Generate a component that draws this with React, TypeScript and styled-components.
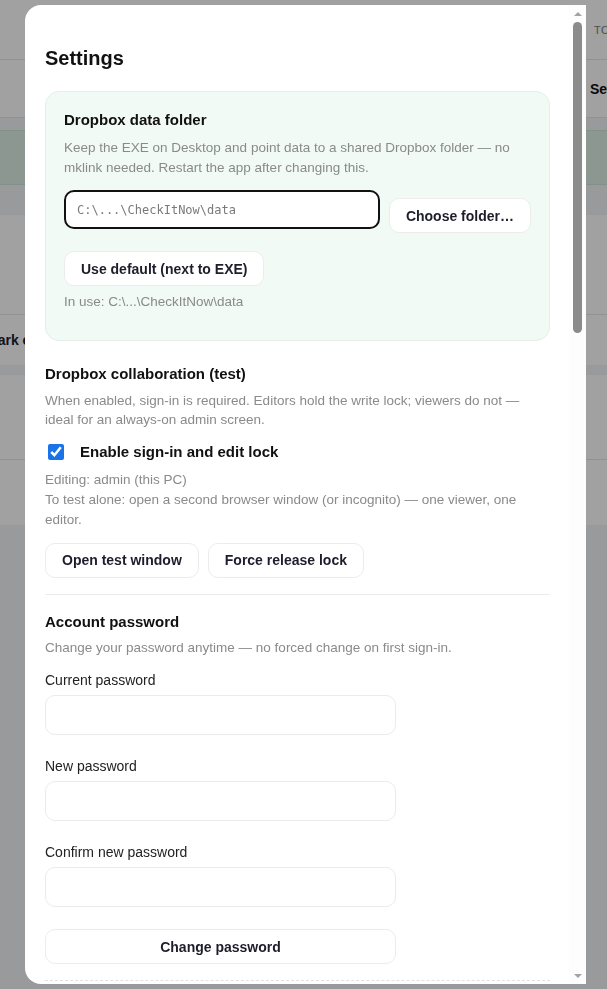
import React from "react";
import styled, { createGlobalStyle } from "styled-components";

const GlobalStyle = createGlobalStyle`
  * { box-sizing: border-box; }
  html, body { margin: 0; padding: 0; height: 100%; overflow: hidden; }
  body {
    font-family: "Liberation Sans", Arial, Helvetica, sans-serif;
    background: #f3f4f6;
    color: #111;
  }
`;

/* ---------- background page (dimmed behind the dialog) ---------- */

const Backdrop = styled.div`
  min-height: 100vh;
  background: #f3f4f6;
  display: flex;
  flex-direction: column;
`;

const TopBar = styled.header`
  background: #fff;
  display: flex;
  flex-direction: column;
`;

const TopRow = styled.div<{ $h: number; $edge: number }>`
  height: ${(p) => p.$h}px;
  display: grid;
  grid-template-columns: 1fr ${(p) => p.$edge}px;
  align-items: center;
  border-bottom: 1px solid #e5e7eb;
  white-space: nowrap;
  overflow: hidden;
`;

const HeaderCaption = styled.span`
  font-size: 11px;
  letter-spacing: 0.4px;
  text-transform: uppercase;
  color: #7a7a7a;
`;

const HeaderAction = styled.span`
  font-size: 14px;
  font-weight: 700;
  color: #111;
`;

const Banner = styled.div`
  margin-top: 12px;
  height: 55px;
  background: #dcefe4;
  border-top: 1px solid #cfe6d8;
  border-bottom: 1px solid #cfe6d8;
`;

const ListCard = styled.section<{ $top: number }>`
  margin-top: ${(p) => p.$top}px;
  background: #fff;
  display: flex;
  flex-direction: column;
`;

const ListRow = styled.div<{ $h: number; $line?: boolean }>`
  height: ${(p) => p.$h}px;
  display: flex;
  align-items: center;
  border-bottom: ${(p) => (p.$line ? "1px solid #e5e7eb" : "none")};
  white-space: nowrap;
  overflow: hidden;
`;

const RowLabel = styled.span`
  margin-left: -14px;
  font-size: 14px;
  font-weight: 700;
  color: #1d1d2c;
`;

/* ---------- dialog ---------- */

const Overlay = styled.div`
  position: fixed;
  inset: 0;
  background: rgba(0, 0, 0, 0.37);
  display: flex;
  justify-content: center;
  align-items: stretch;
  padding: 5px 0 5px 4px;
`;

const Modal = styled.div`
  width: 561px;
  background: #fff;
  border-radius: 16px 0 0 16px;
  overflow: hidden;
  display: flex;
`;

const ScrollArea = styled.div`
  flex: 1;
  min-width: 0;
  overflow-y: auto;
  padding: 0 19px 0 20px;
  scrollbar-width: none;
`;

const Rail = styled.div`
  width: 17px;
  flex-shrink: 0;
  background: #fdfdfd;
  display: flex;
  flex-direction: column;
`;

const RailButton = styled.div`
  height: 17px;
  flex-shrink: 0;
  display: flex;
  align-items: center;
  justify-content: center;
`;

const Arrow = styled.span<{ $down?: boolean }>`
  width: 0;
  height: 0;
  border-left: 4px solid transparent;
  border-right: 4px solid transparent;
  border-top: ${(p) => (p.$down ? "4px solid #a3a3a3" : "0")};
  border-bottom: ${(p) => (p.$down ? "0" : "4px solid #a3a3a3")};
`;

const Track = styled.div`
  flex: 1;
  display: flex;
  flex-direction: column;
  padding: 0 4px;
`;

const Thumb = styled.div<{ $size: number }>`
  height: ${(p) => p.$size}px;
  background: #8b8b8b;
  border-radius: 5px;
`;

const Title = styled.h2`
  margin: 41px 0 21px;
  font-size: 20px;
  line-height: 24px;
  font-weight: 700;
  color: #111;
`;

const FolderCard = styled.section`
  background: #f2faf5;
  border: 1px solid #e3efe8;
  border-radius: 14px;
  padding: 19px 18px 28px;
`;

const Section = styled.section<{ $top: number }>`
  margin-top: ${(p) => p.$top}px;
`;

const SectionTitle = styled.h3`
  margin: 0;
  font-size: 15px;
  line-height: 18px;
  font-weight: 700;
  color: #111;
`;

const Hint = styled.p<{ $top: number; $lh?: number }>`
  margin: ${(p) => p.$top}px 0 0;
  max-width: 480px;
  font-size: 13.5px;
  line-height: ${(p) => p.$lh ?? 19.5}px;
  color: #8a8a8a;
`;

const FolderRow = styled.div`
  margin-top: 13px;
  display: flex;
  align-items: flex-start;
  gap: 9px;
`;

const PathInput = styled.input`
  flex: 1;
  min-width: 0;
  height: 39px;
  border: 2px solid #111;
  border-radius: 10px;
  background: #fff;
  padding: 0 11px;
  font-family: "DejaVu Sans Mono", "Liberation Mono", monospace;
  font-size: 12px;
  color: #7a7a7a;
  outline: none;
  box-shadow: inset 0 0 0 1px #fff;
`;

const Button = styled.button<{ $wide?: boolean }>`
  height: 35px;
  padding: 0 16px;
  width: ${(p) => (p.$wide ? "100%" : "auto")};
  max-width: ${(p) => (p.$wide ? "351px" : "none")};
  display: block;
  background: #fff;
  border: 1px solid #ececec;
  border-radius: 10px;
  font-family: "Liberation Sans", Arial, sans-serif;
  font-size: 14px;
  font-weight: 700;
  color: #1d1d2c;
  white-space: nowrap;
  cursor: pointer;
`;

const ChooseButton = styled(Button)`
  margin-top: 8px;
`;

const ActionRow = styled.div<{ $top: number }>`
  margin-top: ${(p) => p.$top}px;
  display: flex;
  gap: 9px;
`;

const CheckRow = styled.label`
  margin-top: 13px;
  height: 18px;
  display: flex;
  align-items: center;
  gap: 16px;
  font-size: 15px;
  font-weight: 700;
  color: #111;
  cursor: pointer;
`;

const Check = styled.input`
  width: 16px;
  height: 16px;
  margin: 0 0 0 3px;
  accent-color: #1a73e8;
`;

const Divider = styled.hr`
  margin: 16px 0 0;
  border: none;
  border-top: 1px solid #ececec;
`;

const FieldLabel = styled.label<{ $top: number }>`
  display: block;
  margin-top: ${(p) => p.$top}px;
  font-size: 14px;
  line-height: 20px;
  color: #222;
`;

const TextField = styled.input`
  display: block;
  margin-top: 5px;
  width: 100%;
  max-width: 351px;
  height: 40px;
  border: 1px solid #ebebeb;
  border-radius: 10px;
  background: #fff;
  padding: 0 12px;
  font-size: 14px;
  outline: none;
`;

const SubmitRow = styled.div`
  margin-top: 22px;
`;

const MoreSection = styled.section`
  margin-top: 16px;
  border-top: 1px dashed #e2e2e2;
  padding: 20px 0 40px;
`;

export default function App() {
  return (
    <>
      <GlobalStyle />
      <Backdrop>
        <TopBar>
          <TopRow $h={60} $edge={13}>
            <span />
            <HeaderCaption>Total items</HeaderCaption>
          </TopRow>
          <TopRow $h={58} $edge={17}>
            <span />
            <HeaderAction>Settings</HeaderAction>
          </TopRow>
        </TopBar>
        <Banner />
        <ListCard $top={30}>
          <ListRow $h={100} $line />
          <ListRow $h={50}>
            <RowLabel>Mark checked</RowLabel>
          </ListRow>
        </ListCard>
        <ListCard $top={10}>
          <ListRow $h={85} $line />
          <ListRow $h={65} />
        </ListCard>
      </Backdrop>

      <Overlay>
        <Modal role="dialog" aria-label="Settings">
          <ScrollArea>
            <Title>Settings</Title>

            <FolderCard>
              <SectionTitle>Dropbox data folder</SectionTitle>
              <Hint $top={9}>
                Keep the EXE on Desktop and point data to a shared Dropbox folder — no
                mklink needed. Restart the app after changing this.
              </Hint>
              <FolderRow>
                <PathInput defaultValue={"C:\\...\\CheckItNow\\data"} />
                <ChooseButton>Choose folder…</ChooseButton>
              </FolderRow>
              <ActionRow $top={18}>
                <Button>Use default (next to EXE)</Button>
              </ActionRow>
              <Hint $top={6}>In use: C:\...\CheckItNow\data</Hint>
            </FolderCard>

            <Section $top={24}>
              <SectionTitle>Dropbox collaboration (test)</SectionTitle>
              <Hint $top={8}>
                When enabled, sign-in is required. Editors hold the write lock; viewers do not —
                ideal for an always-on admin screen.
              </Hint>
              <CheckRow>
                <Check type="checkbox" defaultChecked />
                Enable sign-in and edit lock
              </CheckRow>
              <Hint $top={9} $lh={20}>
                Editing: admin (this PC)
                <br />
                To test alone: open a second browser window (or incognito) — one viewer, one
                editor.
              </Hint>
              <ActionRow $top={13}>
                <Button>Open test window</Button>
                <Button>Force release lock</Button>
              </ActionRow>
            </Section>

            <Divider />

            <Section $top={18}>
              <SectionTitle>Account password</SectionTitle>
              <Hint $top={7}>Change your password anytime — no forced change on first sign-in.</Hint>
              <FieldLabel $top={13}>Current password</FieldLabel>
              <TextField type="password" />
              <FieldLabel $top={21}>New password</FieldLabel>
              <TextField type="password" />
              <FieldLabel $top={21}>Confirm new password</FieldLabel>
              <TextField type="password" />
              <SubmitRow>
                <Button $wide>Change password</Button>
              </SubmitRow>
            </Section>

            <MoreSection>
              <SectionTitle>Backups</SectionTitle>
            </MoreSection>
          </ScrollArea>

          <Rail aria-hidden>
            <RailButton>
              <Arrow />
            </RailButton>
            <Track>
              <Thumb $size={311} />
            </Track>
            <RailButton>
              <Arrow $down />
            </RailButton>
          </Rail>
        </Modal>
      </Overlay>
    </>
  );
}
